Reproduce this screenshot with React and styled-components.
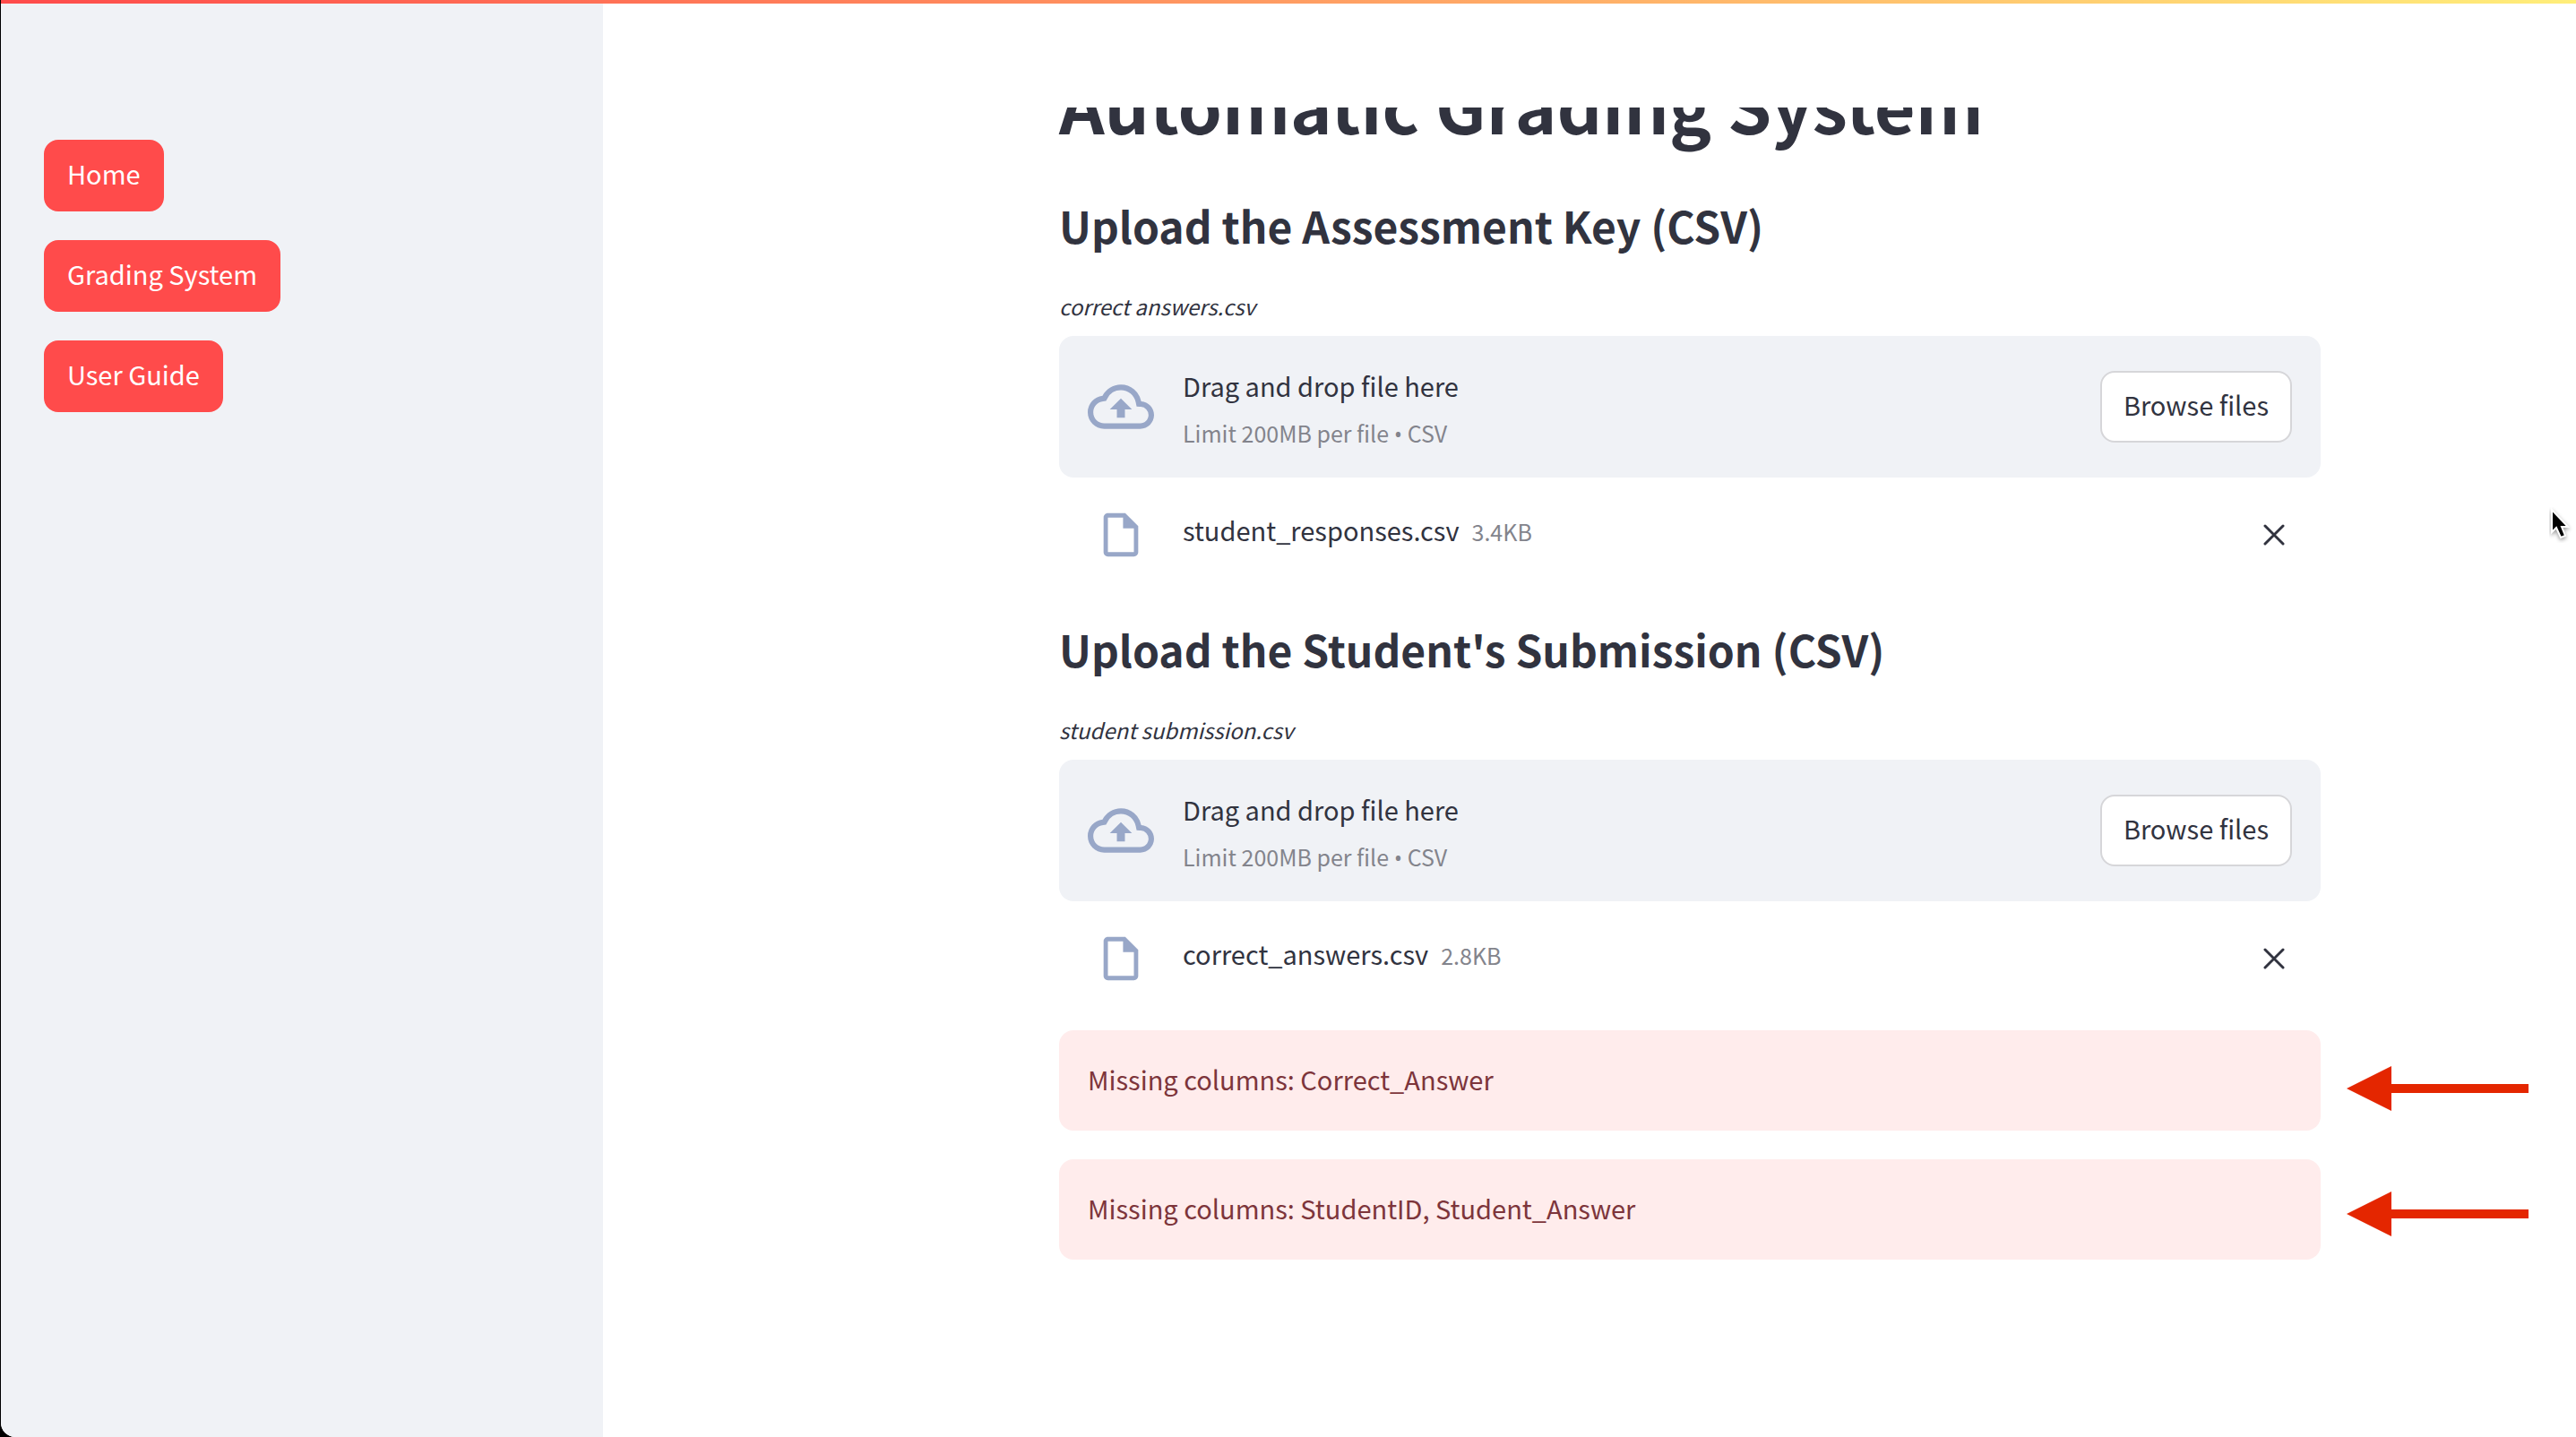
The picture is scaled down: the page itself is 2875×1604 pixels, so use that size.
import React, { useRef } from "react";
import styled, { createGlobalStyle } from "styled-components";

const GlobalStyle = createGlobalStyle`
  * { box-sizing: border-box; }
  body { margin: 0; background: #000; }
  body, button, input {
    font-family: "Noto Sans CJK SC", "Noto Sans", sans-serif;
  }
`;

const ink = "#31333f";
const faded = "#83848c";
const panel = "#f0f2f6";
const slate = "#98a7c8";

const Shell = styled.div`
  position: relative;
  display: flex;
  min-height: 100vh;
  margin-left: 1px;
  overflow: hidden;
  background: #fff;
  border-bottom-left-radius: 16px;
  color: ${ink};
  font-size: 29px;
`;

const Decoration = styled.div`
  position: absolute;
  inset: 0 0 auto;
  height: 4px;
  background: linear-gradient(90deg, #ff4b4b, #ffee7a);
`;

const Sidebar = styled.nav`
  flex: 0 0 672px;
  display: flex;
  flex-direction: column;
  align-items: flex-start;
  gap: 32px;
  padding: 156px 48px 48px;
  background: ${panel};
`;

const Button = styled.button`
  height: 80px;
  padding: 0 24px 6px;
  border: 2px solid ${(p) => (p.$primary ? "#ff4b4b" : "#d6d6d9")};
  border-radius: 16px;
  background: ${(p) => (p.$primary ? "#ff4b4b" : "#fff")};
  color: ${(p) => (p.$primary ? "#fff" : ink)};
  font-size: 29px;
  line-height: 48px;
  white-space: nowrap;
  cursor: pointer;
`;

const Main = styled.main`
  flex: 1;
  min-width: 0;
  padding-top: 120px;
`;

const Viewport = styled.div`
  overflow: hidden;
  display: grid;
  grid-template-columns: minmax(0, 509fr) minmax(0, 1408px) minmax(0, 285fr);
`;

const Content = styled.div`
  grid-column: 2;
  display: flex;
  flex-direction: column;
  gap: 32px;
  margin-top: -60px;
  padding-bottom: 80px;
`;

const Title = styled.h1`
  margin: 0;
  font-size: 79px;
  font-weight: 700;
  line-height: 112px;
`;

const Heading = styled.h3`
  margin: 0;
  padding-top: 13px;
  font-size: 48px;
  font-weight: 600;
  line-height: 68px;
`;

const Uploader = styled.div`
  display: flex;
  flex-direction: column;
`;

const UploadLabel = styled.label`
  margin-bottom: 8px;
  font-size: 24px;
  font-style: italic;
  line-height: 50px;
`;

const Dropzone = styled.section`
  display: flex;
  align-items: center;
  gap: 32px;
  height: 158px;
  padding: 0 32px;
  border-radius: 16px;
  background: ${panel};
`;

const Instructions = styled.div`
  flex: 1;
  display: flex;
  flex-direction: column;
  gap: 3px;
  padding-top: 3px;
`;

const Prompt = styled.span`
  line-height: 52px;
`;

const Small = styled.small`
  color: ${faded};
  font-size: 25px;
  line-height: 48px;
`;

const Bullet = styled.span`
  font-family: "Open Sans", "Noto Sans", sans-serif;
`;

const HiddenInput = styled.input`
  display: none;
`;

const FileRow = styled.div`
  display: flex;
  align-items: center;
  gap: 32px;
  height: 112px;
  padding: 16px 32px 0;
`;

const IconBox = styled.span`
  flex: 0 0 74px;
  display: flex;
  justify-content: center;
  color: ${slate};
`;

const FileName = styled.div`
  flex: 1;
  display: flex;
  align-items: baseline;
  gap: 14px;
  padding-bottom: 10px;
  line-height: 48px;
`;

const CloseButton = styled.button`
  display: flex;
  justify-content: center;
  align-items: center;
  width: 40px;
  height: 40px;
  padding: 0;
  border: 0;
  background: none;
  color: ${ink};
  cursor: pointer;
`;

const Alert = styled.div`
  position: relative;
  padding: 30px 32px 34px;
  border-radius: 16px;
  background: #ffecec;
  color: #7d353b;
  line-height: 48px;
`;

const Alerts = styled.div`
  position: relative;
  display: flex;
  flex-direction: column;
  gap: 32px;
`;

const Arrows = styled.svg`
  position: absolute;
  top: 40px;
  left: calc(100% + 29px);
`;

const Pointer = styled.svg`
  position: absolute;
  top: 566px;
  right: 0;
`;

const CloudIcon = () => (
  <svg width="74" height="74" viewBox="0 0 24 24" fill="currentColor" aria-hidden="true">
    <path d="M19.35 10.04A7.49 7.49 0 0 0 12 4C9.11 4 6.6 5.64 5.35 8.04A5.994 5.994 0 0 0 0 14c0 3.31 2.69 6 6 6h13c2.76 0 5-2.24 5-5 0-2.64-2.05-4.78-4.65-4.96zM19 18H6c-2.21 0-4-1.79-4-4 0-2.05 1.53-3.76 3.56-3.97l1.07-.11.5-.95A5.469 5.469 0 0 1 12 6c2.62 0 4.88 1.86 5.39 4.43l.3 1.5 1.53.11A2.98 2.98 0 0 1 22 15c0 1.65-1.35 3-3 3zM8 13h2.55v3h2.9v-3H16l-4-4z" />
  </svg>
);

const FileIcon = () => (
  <svg width="58" height="58" viewBox="0 0 24 24" fill="currentColor" aria-hidden="true">
    <path d="M14 2H6c-1.1 0-1.99.9-1.99 2L4 20c0 1.1.89 2 1.99 2H18c1.1 0 2-.9 2-2V8l-6-6zM6 20V4h7v5h5v11H6z" />
  </svg>
);

const CloseIcon = () => (
  <svg width="24" height="24" viewBox="0 0 24 24" fill="none" stroke="currentColor" strokeWidth="3" strokeLinecap="round" aria-hidden="true">
    <path d="M2 2l20 20M22 2L2 22" />
  </svg>
);

function FileUpload({ id, label, fileName, size }) {
  const input = useRef(null);
  return (
    <Uploader>
      <UploadLabel htmlFor={id}>{label}</UploadLabel>
      <Dropzone>
        <IconBox><CloudIcon /></IconBox>
        <Instructions>
          <Prompt>Drag and drop file here</Prompt>
          <Small>Limit 200MB per file <Bullet>•</Bullet> CSV</Small>
        </Instructions>
        <HiddenInput id={id} ref={input} type="file" accept=".csv" />
        <Button type="button" onClick={() => input.current.click()}>Browse files</Button>
      </Dropzone>
      <FileRow>
        <IconBox><FileIcon /></IconBox>
        <FileName>
          <span>{fileName}</span>
          <Small>{size}</Small>
        </FileName>
        <CloseButton type="button" aria-label="Remove file"><CloseIcon /></CloseButton>
      </FileRow>
    </Uploader>
  );
}

export default function App() {
  return (
    <>
      <GlobalStyle />
      <Shell>
        <Sidebar>
          <Button $primary type="button">Home</Button>
          <Button $primary type="button">Grading System</Button>
          <Button $primary type="button">User Guide</Button>
        </Sidebar>
        <Main>
          <Viewport>
            <Content>
              <Title>Automatic Grading System</Title>
              <Heading>Upload the Assessment Key (CSV)</Heading>
              <FileUpload id="key" label="correct answers.csv" fileName="student_responses.csv" size="3.4KB" />
              <Heading>Upload the Student's Submission (CSV)</Heading>
              <FileUpload id="submission" label="student submission.csv" fileName="correct_answers.csv" size="2.8KB" />
              <Alerts>
                <Alert role="alert">Missing columns: Correct_Answer</Alert>
                <Alert role="alert">Missing columns: StudentID, Student_Answer</Alert>
                <Arrows width="204" height="190" viewBox="0 0 204 190" fill="#e42600" aria-hidden="true">
                  <path d="M0 25L50 0V20H203V30H50V50Z" />
                  <path d="M0 165L50 140V160H203V170H50V190Z" />
                </Arrows>
              </Alerts>
            </Content>
          </Viewport>
        </Main>
        <Decoration />
        <Pointer width="30" height="40" viewBox="0 0 30 40" aria-hidden="true">
          <path d="M3 3V28L8 23L13 34L18 32L14 22H21Z" fill="#000" stroke="#fff" strokeWidth="2" filter="drop-shadow(0 2px 2px rgba(0,0,0,.4))" />
        </Pointer>
      </Shell>
    </>
  );
}
